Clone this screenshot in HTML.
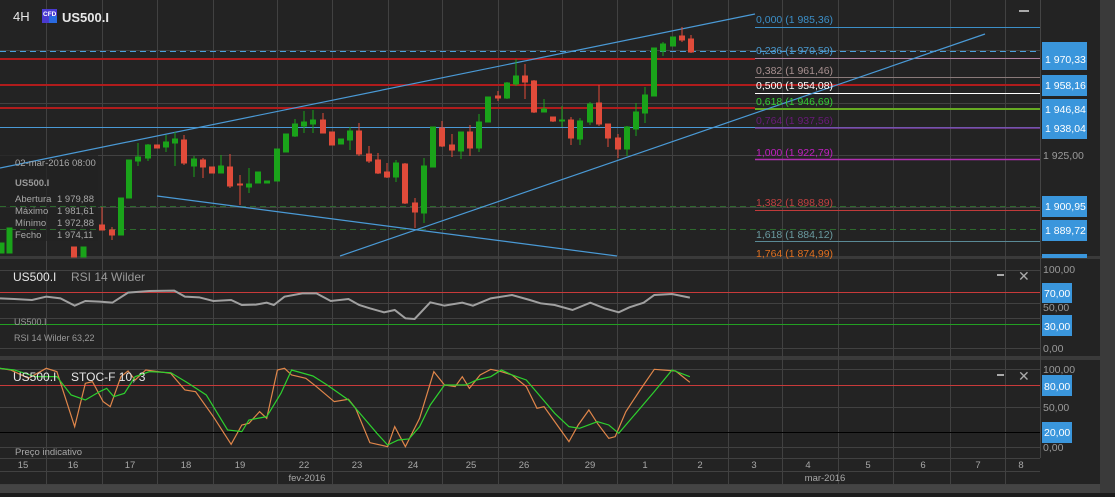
<!DOCTYPE html>
<html><head><meta charset="utf-8"><style>
html,body{margin:0;padding:0;background:#232323;width:1115px;height:497px;overflow:hidden}
svg{display:block}
text{font-family:"Liberation Sans",sans-serif}
</style></head><body>
<svg width="1115" height="497" viewBox="0 0 1115 497" xmlns="http://www.w3.org/2000/svg">
<rect x="0" y="0" width="1115" height="497" fill="#232323"/>
<!-- right gray column -->
<rect x="1100" y="0" width="15" height="497" fill="#3a3a3a"/>
<!-- separators -->
<rect x="0" y="256" width="1100" height="3" fill="#3a3a3a"/>
<rect x="0" y="356" width="1100" height="4" fill="#3a3a3a"/>
<rect x="0" y="484" width="1100" height="9" fill="#444"/>
<rect x="0" y="493" width="1115" height="4" fill="#1c1c1c"/>
<line x1="1040.5" y1="0" x2="1040.5" y2="458" stroke="#444"/>
<!-- vertical grid -->
<g stroke="#414141" stroke-width="1">
<path d="M46.5 0V484M102.5 0V484M157.5 0V484M213.5 0V484M277.5 0V484M332.5 0V484M388.5 0V484M442.5 0V484M498.5 0V484M562.5 0V484M617.5 0V484M672.5 0V484M728.5 0V484M782.5 0V484M838.5 0V484M893.5 0V484M950.5 0V484M1005.5 0V484"/>
<path d="M0 50.5H1040M0 103.5H1040M0 155.5H1040M0 207.5H1040"/>
<path d="M0 270.5H1040M0 303.5H1040M0 318.5H1040M0 348.5H1040"/>
<path d="M0 369.5H1040M0 407.5H1040M0 447.5H1040"/>
<path d="M0 458.5H1040M0 471.5H1040M0 484.5H1040"/>
</g>
<!-- info box -->
<rect x="0" y="155" width="98" height="86" fill="#232323" opacity="0.75"/>
<!-- main horizontal lines -->
<line x1="0" y1="51.5" x2="1040" y2="51.5" stroke="#4aa0dc" stroke-dasharray="6,4"/>
<line x1="0" y1="59" x2="755" y2="59" stroke="#b01c1c" stroke-width="2"/>
<line x1="0" y1="85" x2="1040" y2="85" stroke="#b01c1c" stroke-width="2"/>
<line x1="0" y1="108" x2="755" y2="108" stroke="#b01c1c" stroke-width="2"/>
<line x1="0" y1="127.5" x2="1040" y2="127.5" stroke="#4a9ad6"/>
<line x1="0" y1="206.5" x2="1040" y2="206.5" stroke="#2e6a2e" stroke-dasharray="6,4"/>
<line x1="0" y1="229.5" x2="1040" y2="229.5" stroke="#2e6a2e" stroke-dasharray="6,4"/>
<!-- fib lines -->
<line x1="755" y1="27.5" x2="1040" y2="27.5" stroke="#3c8fc8"/>
<line x1="755" y1="58.5" x2="1040" y2="58.5" stroke="#b080a0"/>
<line x1="755" y1="77.5" x2="1040" y2="77.5" stroke="#8a7a7a"/>
<line x1="755" y1="93.5" x2="1040" y2="93.5" stroke="#ffffff"/>
<line x1="755" y1="109" x2="1040" y2="109" stroke="#66aa22" stroke-width="2"/>
<line x1="755" y1="128" x2="1040" y2="128" stroke="#8040a0" stroke-width="1.5"/>
<line x1="755" y1="159.5" x2="1040" y2="159.5" stroke="#b030b0" stroke-width="1.5"/>
<line x1="755" y1="210.5" x2="1040" y2="210.5" stroke="#c03a3a"/>
<line x1="755" y1="241.5" x2="1040" y2="241.5" stroke="#5a8a96"/>
<!-- trend lines -->
<g stroke="#4a9ad6" stroke-width="1.2">
<line x1="0" y1="168" x2="755" y2="14"/>
<line x1="340" y1="256" x2="985" y2="34"/>
<line x1="157" y1="196" x2="617" y2="256"/>
</g>
<!-- candles -->
<g stroke-width="1">
<g fill="#1aa31a" stroke="#1aa31a">
<rect x="0" y="243" width="4" height="10"/>
<rect x="7" y="228" width="5" height="25"/>
<rect x="81" y="247" width="5" height="10"/>
<path d="M121 198V235M129 160V198M138 143V166M148 144V161M166 135V152M175 132V166M194 156V177M221 155V173M249 168V193M295 119V137M304 111V133M313 110V133M350 127V150M396 160V182M424 158V223M461 132V159M479 114V152M488 97V122M507 82V99M516 59V86M544 99V112M562 106V127M580 118V145M590 102V125M627 126V156M636 103V136M645 87V123M654 48V96M663 42V56M673 37V46"/>
<rect x="118.5" y="198" width="5" height="37"/>
<rect x="126.5" y="160" width="5" height="38"/>
<rect x="135.5" y="157" width="5" height="4"/>
<rect x="145.5" y="145" width="5" height="13"/>
<rect x="163.5" y="142" width="5" height="5"/>
<rect x="172.5" y="139" width="5" height="4"/>
<rect x="191.5" y="159" width="5" height="7"/>
<rect x="218.5" y="166" width="5" height="7"/>
<rect x="246.5" y="184" width="5" height="3"/>
<rect x="255.5" y="172" width="5" height="11"/>
<rect x="264.5" y="181" width="5" height="2"/>
<rect x="274.5" y="149" width="5" height="32"/>
<rect x="283.5" y="134" width="5" height="18"/>
<rect x="292.5" y="124" width="5" height="12"/>
<rect x="301.5" y="122" width="5" height="4"/>
<rect x="310.5" y="120" width="5" height="4"/>
<rect x="338.5" y="139" width="5" height="5"/>
<rect x="347.5" y="131" width="5" height="9"/>
<rect x="393.5" y="163" width="5" height="14"/>
<rect x="421.5" y="166" width="5" height="47"/>
<rect x="430.5" y="127" width="5" height="40"/>
<rect x="458.5" y="132" width="5" height="19"/>
<rect x="476.5" y="122" width="5" height="26"/>
<rect x="485.5" y="97" width="5" height="25"/>
<rect x="504.5" y="83" width="5" height="15"/>
<rect x="513.5" y="76" width="5" height="8"/>
<rect x="541.5" y="109" width="5" height="3"/>
<rect x="559.5" y="120" width="5" height="1"/>
<rect x="577.5" y="121" width="5" height="18"/>
<rect x="587.5" y="104" width="5" height="18"/>
<rect x="624.5" y="127" width="5" height="22"/>
<rect x="633.5" y="112" width="5" height="17"/>
<rect x="642.5" y="95" width="5" height="18"/>
<rect x="651.5" y="48" width="5" height="48"/>
<rect x="660.5" y="44" width="5" height="7"/>
<rect x="670.5" y="37" width="5" height="9"/>
</g>
<g fill="#e04b3a" stroke="#e04b3a">
<path d="M102 207V230M112 227V240M184 135V165M203 158V178M230 154V188M240 175V205M323 113V133M359 123V156M369 146V163M378 153V174M387 163V178M405 163V204M415 198V228M442 121V147M452 134V157M470 125V156M498 91V101M525 64V99M534 80V113M553 117V122M571 117V145M599 85V126M608 124V147M618 134V158M682 27V42M691 35V53"/>
<rect x="71.5" y="247" width="5" height="10"/>
<rect x="99.5" y="225" width="5" height="5"/>
<rect x="109.5" y="230" width="5" height="5"/>
<rect x="154.5" y="145" width="5" height="3"/>
<rect x="181.5" y="140" width="5" height="23"/>
<rect x="200.5" y="160" width="5" height="7"/>
<rect x="209.5" y="167" width="5" height="6"/>
<rect x="227.5" y="167" width="5" height="19"/>
<rect x="237.5" y="184" width="5" height="1"/>
<rect x="320.5" y="120" width="5" height="13"/>
<rect x="329.5" y="132" width="5" height="13"/>
<rect x="356.5" y="131" width="5" height="23"/>
<rect x="366.5" y="154" width="5" height="7"/>
<rect x="375.5" y="160" width="5" height="13"/>
<rect x="384.5" y="172" width="5" height="5"/>
<rect x="402.5" y="164" width="5" height="39"/>
<rect x="412.5" y="203" width="5" height="9"/>
<rect x="439.5" y="128" width="5" height="18"/>
<rect x="449.5" y="145" width="5" height="5"/>
<rect x="467.5" y="132" width="5" height="16"/>
<rect x="495.5" y="96" width="5" height="2"/>
<rect x="522.5" y="76" width="5" height="6"/>
<rect x="531.5" y="81" width="5" height="31"/>
<rect x="550.5" y="117" width="5" height="4"/>
<rect x="568.5" y="120" width="5" height="18"/>
<rect x="596.5" y="103" width="5" height="21"/>
<rect x="605.5" y="124" width="5" height="14"/>
<rect x="615.5" y="138" width="5" height="11"/>
<rect x="679.5" y="36" width="5" height="4"/>
<rect x="688.5" y="39" width="5" height="13"/>
</g>
</g>
<!-- fib labels -->
<g font-size="10.5">
<text x="756" y="23" fill="#3c8fc8">0,000 (1 985,36)</text>
<text x="756" y="54" fill="#4a9ad0">0,236 (1 970,59)</text>
<text x="756" y="74" fill="#a89090">0,382 (1 961,46)</text>
<text x="756" y="89" fill="#ffffff">0,500 (1 954,08)</text>
<text x="756" y="105" fill="#33cc33">0,618 (1 946,69)</text>
<text x="756" y="124" fill="#6a1a7a">0,764 (1 937,56)</text>
<text x="756" y="156" fill="#c020c0">1,000 (1 922,79)</text>
<text x="756" y="206" fill="#c04040">1,382 (1 898,89)</text>
<text x="756" y="238" fill="#6a9aa0">1,618 (1 884,12)</text>
<text x="756" y="257" fill="#e07020">1,764 (1 874,99)</text>
</g>
<!-- right price boxes -->
<g fill="#3a96dc">
<rect x="1042" y="42" width="45" height="28"/>
<rect x="1042" y="75" width="45" height="21"/>
<rect x="1042" y="99" width="45" height="21"/>
<rect x="1042" y="118" width="45" height="21"/>
<rect x="1042" y="196" width="45" height="21"/>
<rect x="1042" y="220" width="45" height="21"/>
<rect x="1042" y="254" width="45" height="4"/>
<rect x="1042" y="283" width="30" height="20"/>
<rect x="1042" y="315" width="30" height="21"/>
<rect x="1042" y="375" width="30" height="21"/>
<rect x="1042" y="422" width="30" height="21"/>
</g>
<g font-size="10.5" fill="#ffffff">
<text x="1045" y="63">1 970,33</text>
<text x="1045" y="89">1 958,16</text>
<text x="1045" y="113">1 946,84</text>
<text x="1045" y="132">1 938,04</text>
<text x="1045" y="210">1 900,95</text>
<text x="1045" y="234">1 889,72</text>
<text x="1044" y="297">70,00</text>
<text x="1044" y="330">30,00</text>
<text x="1044" y="390">80,00</text>
<text x="1044" y="436">20,00</text>
</g>
<g font-size="10.5" fill="#9a9a9a">
<text x="1043" y="159">1 925,00</text>
<text x="1043" y="273">100,00</text>
<text x="1043" y="311">50,00</text>
<text x="1043" y="352">0,00</text>
<text x="1043" y="373">100,00</text>
<text x="1043" y="411">50,00</text>
<text x="1043" y="451">0,00</text>
</g>
<!-- header -->
<text x="13" y="21" font-size="13" fill="#e8e8e8">4H</text>
<rect x="42" y="9" width="15" height="14" fill="#4a3ad0"/>
<rect x="49" y="16" width="8" height="7" fill="#2a6ae0"/>
<text x="43" y="16" font-size="6.5" font-weight="bold" fill="#fff">CFD</text>
<text x="62" y="22" font-size="13" font-weight="bold" fill="#e8e8e8">US500.I</text>
<rect x="1019" y="10" width="10" height="2" fill="#aaa"/>
<!-- info text -->
<g font-size="9.5" fill="#a8a8a8">
<text x="15" y="166">02-mar-2016 08:00</text>
<text x="15" y="186" font-weight="bold" fill="#999">US500.I</text>
<text x="15" y="202">Abertura</text><text x="57" y="202">1 979,88</text>
<text x="15" y="214">Máximo</text><text x="57" y="214">1 981,61</text>
<text x="15" y="226">Mínimo</text><text x="57" y="226">1 972,88</text>
<text x="15" y="238">Fecho</text><text x="57" y="238">1 974,11</text>
</g>
<!-- RSI panel -->
<line x1="0" y1="292.5" x2="1040" y2="292.5" stroke="#c83a3a"/>
<line x1="0" y1="324.5" x2="1040" y2="324.5" stroke="#22a022"/>
<text x="13" y="281" font-size="12" fill="#e8e8e8">US500.I</text>
<text x="71" y="281" font-size="12" fill="#9a9a9a">RSI 14 Wilder</text>
<text x="14" y="325" font-size="9" fill="#999">US500.I</text>
<text x="14" y="341" font-size="9" fill="#999">RSI 14 Wilder 63,22</text>
<rect x="997" y="274" width="7" height="2" fill="#aaa"/>
<text x="1018" y="281" font-size="14" fill="#aaa">✕</text>
<g transform="translate(0,260) scale(0.7112,0.3333)">
<polyline fill="none" stroke="#a0a0a0" stroke-width="2" vector-effect="non-scaling-stroke" points="0,115 20,117 45,120 65,110 85,115 105,137 120,123 140,125 158,128 180,98 210,93 245,92 260,110 280,112 300,123 325,120 340,135 360,134 375,128 385,135 400,110 425,100 445,100 465,123 490,117 505,135 520,145 540,157 555,150 570,175 583,177 605,127 625,137 650,128 665,137 690,115 720,105 745,120 760,130 780,135 805,150 830,128 850,145 870,157 885,142 905,128 920,105 945,102 970,113"/>
</g>
<!-- STOC panel -->
<line x1="0" y1="385.5" x2="1040" y2="385.5" stroke="#c83a3a"/>
<line x1="0" y1="432.5" x2="1040" y2="432.5" stroke="#000"/>
<g transform="translate(0,260) scale(0.7112,0.3333)">
<polyline fill="none" stroke="#e0864a" stroke-width="1.2" vector-effect="non-scaling-stroke" points="0,325 15,330 40,355 65,325 80,335 105,500 120,370 130,365 145,425 155,440 170,350 180,333 190,360 205,330 240,340 260,390 275,395 300,470 325,553 340,495 350,490 365,455 375,475 390,330 400,325 410,345 430,355 445,380 470,425 490,418 500,445 520,548 545,560 555,500 570,560 590,475 610,335 625,375 640,380 650,350 660,385 675,345 690,328 705,335 720,345 740,380 755,445 765,440 780,485 800,545 813,495 828,450 840,490 856,535 865,530 880,455 900,390 920,328 950,333 970,367"/>
<polyline fill="none" stroke="#2ed02e" stroke-width="1.2" vector-effect="non-scaling-stroke" points="0,325 20,330 50,350 80,350 100,405 120,420 140,395 150,385 160,410 175,400 190,350 210,335 240,338 265,370 290,405 320,510 340,515 350,480 375,470 395,400 410,330 440,348 460,375 490,420 510,470 530,520 545,555 560,540 575,537 590,500 605,435 625,375 655,375 670,360 690,350 705,330 720,345 740,360 760,410 780,460 800,500 815,505 840,485 856,495 870,520 890,470 920,395 945,330 970,350"/>
</g>
<text x="13" y="381" font-size="12" fill="#e8e8e8">US500.I</text>
<text x="71" y="381" font-size="12" fill="#e8e8e8">STOC-F 10, 3</text>
<rect x="997" y="374" width="7" height="2" fill="#aaa"/>
<text x="1018" y="381" font-size="14" fill="#aaa">✕</text>
<text x="15" y="455" font-size="9.5" fill="#a8a8a8">Preço indicativo</text>
<!-- date axis -->
<g font-size="9.5" fill="#a8a8a8" text-anchor="middle">
<text x="23" y="468">15</text><text x="73" y="468">16</text><text x="130" y="468">17</text><text x="186" y="468">18</text><text x="240" y="468">19</text><text x="304" y="468">22</text><text x="357" y="468">23</text><text x="413" y="468">24</text><text x="471" y="468">25</text><text x="524" y="468">26</text><text x="590" y="468">29</text><text x="645" y="468">1</text><text x="700" y="468">2</text><text x="754" y="468">3</text><text x="808" y="468">4</text><text x="868" y="468">5</text><text x="923" y="468">6</text><text x="978" y="468">7</text><text x="1021" y="468">8</text>
<text x="307" y="481">fev-2016</text><text x="825" y="481">mar-2016</text>
</g>
</svg>
</body></html>
